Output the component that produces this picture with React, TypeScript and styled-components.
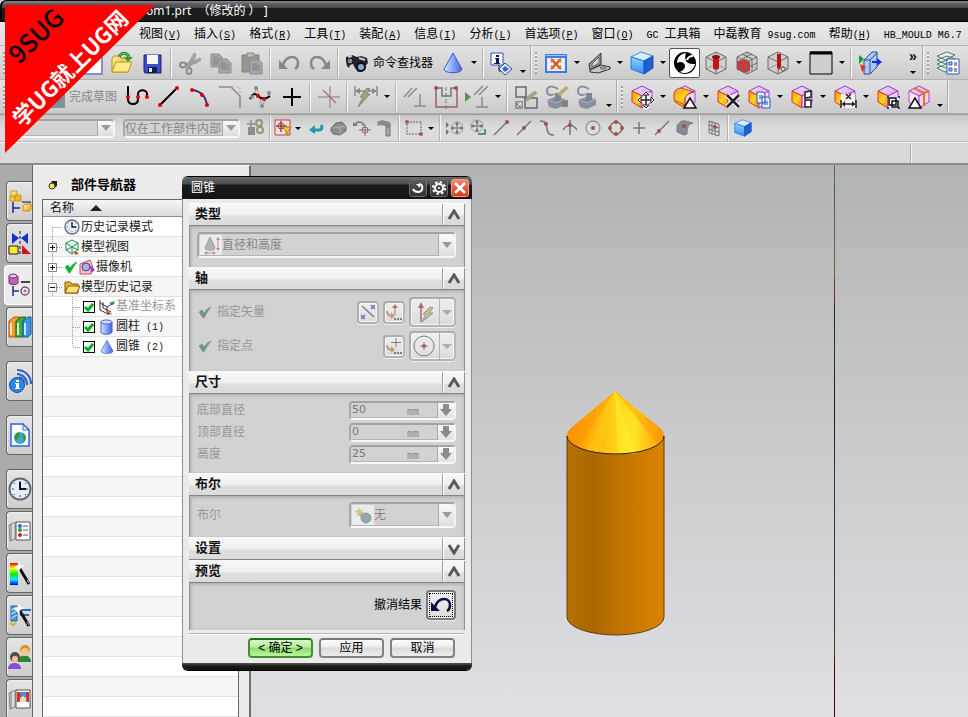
import React from "react";
import styled, { createGlobalStyle, css } from "styled-components";

const cjk = `"Liberation Sans", "Noto Sans CJK SC", sans-serif`;
const mono = `"Liberation Mono", "Noto Sans CJK SC", monospace`;

const GlobalStyle = createGlobalStyle`
  * { box-sizing: border-box; }
  body { margin: 0; background: #d4d4d4; font: 12px/16px ${cjk}; color: #111; }
  button, input, select { font: inherit; color: inherit; }
`;

/* ---------- frame ---------- */

const Page = styled.div`
  position: relative;
  display: flex;
  flex-direction: column;
  height: 100vh;
  overflow: hidden;
`;

const TitleBar = styled.header`
  flex: none;
  height: 22px;
  padding: 2px 0 0 144px;
  border: solid #000;
  border-width: 1px 0 1px 2px;
  border-radius: 6px 0 0 0;
  background: linear-gradient(#85858b 0, #5b5b60 3px, #48484c 7px, #1c1c1c 7px);
  color: #fff;
  font: 12px/16px "Noto Sans", "Noto Sans CJK SC", sans-serif;
  white-space: pre;
`;

const MenuBar = styled.nav`
  flex: none;
  display: flex;
  gap: 13px;
  height: 24px;
  padding: 4px 0 0 139px;
  background: linear-gradient(#e8e8e8, #dedede);
  border-bottom: 1px solid #b5b5b5;
  overflow: hidden;
`;

const MenuLink = styled.a`
  flex: none;
  color: #000;
  text-decoration: none;
  white-space: pre;
  line-height: 16px;
  small { font: 10px/16px ${mono}; }
`;

const ToolRow = styled.div`
  flex: none;
  display: flex;
  height: 34px;
  border-bottom: 1px solid #b2b2b2;
  background: #d3d3d3;
  overflow: hidden;
`;

const SelectionRow = styled.div`
  flex: none;
  display: flex;
  align-items: center;
  height: 28px;
  padding-left: 6px;
  border-top: 1px solid #999;
  border-bottom: 1px solid #bbb;
  background: linear-gradient(#c6c6c6, #dbdbdb 12px, #dcdcdc);
  overflow: hidden;
`;

const CueRow = styled.div`
  flex: none;
  display: flex;
  height: 23px;
  border-top: 1px solid #f2f2f2;
  border-bottom: 2px solid #8c8c8c;
  background: #d9d9d9;
`;
const CueText = styled.div`
  flex: 1;
  border-right: 1px solid #aaa;
`;
const StatusText = styled.div`
  width: 57px;
  border-left: 1px solid #f4f4f4;
`;

const Toolbar = styled.div<{ $lead?: number }>`
  flex: none;
  display: flex;
  align-items: center;
  padding: 0 1px 0 0;
  border-right: 1px solid #a8a8a8;
  box-shadow: 1px 0 0 #f4f4f4;
  background: linear-gradient(#e2e2e2, #dadada 40%, #cacaca);
  margin-right: 1px;
  > :first-child { margin-right: ${(p) => p.$lead ?? 3}px; }
`;

const Grip = styled.span`
  width: 2px;
  height: 22px;
  margin: 0 3px;
  background: repeating-linear-gradient(#a2a2a2 0 2px, #ececec 2px 4px);
`;

const Tool = styled.button<{ $size?: "small" | "tight"; $framed?: boolean }>`
  flex: none;
  display: flex;
  align-items: center;
  justify-content: center;
  width: ${(p) => (p.$size === "tight" ? 19 : p.$size === "small" ? 23 : 31)}px;
  height: ${(p) => (p.$size ? 22 : 30)}px;
  padding: 0;
  border: ${(p) => (p.$framed ? "1px solid #555" : "0")};
  border-radius: 2px;
  background: ${(p) => (p.$framed ? "#fff" : "none")};
  svg { flex: none; }
`;

const TextTool = styled.button<{ $dim?: boolean }>`
  flex: none;
  display: flex;
  align-items: center;
  gap: 4px;
  height: 30px;
  padding: 0 4px;
  border: 0;
  background: none;
  color: ${(p) => (p.$dim ? "#8a8a8a" : "#000")};
  white-space: nowrap;
`;

const Sep = styled.span`
  flex: none;
  width: 2px;
  height: 30px;
  margin: 0 2px;
  border-left: 1px solid #b4b4b4;
  border-right: 1px solid #f6f6f6;
`;

const Drop = styled.button<{ $low?: boolean }>`
  flex: none;
  display: flex;
  justify-content: center;
  align-items: center;
  width: 12px;
  height: 24px;
  padding: ${(p) => (p.$low ? "18px 0 0" : "0")};
  border: 0;
  background: none;
  &::before {
    content: "";
    border: solid transparent;
    border-width: 3px 3px 0;
    border-top-color: #000;
  }
`;

const Overflow = styled.button`
  display: flex;
  flex-direction: column;
  align-items: center;
  justify-content: space-between;
  width: 16px;
  height: 26px;
  margin-left: 20px;
  padding: 0 0 2px;
  border: 0;
  background: none;
  font: bold 14px/12px ${cjk};
  &::after {
    content: "";
    border: solid transparent;
    border-width: 3px 3px 0;
    border-top-color: #000;
  }
`;

/* ---------- combos and fields ---------- */

const wellBorder = css`
  border: 2px solid;
  border-color: #a3a3a3 #f4f4f4 #f8f8f8 #a8a8a8;
  border-radius: 4px;
  box-shadow: inset -1px -1px 0 #b4b4b4;
`;

type ComboKind = "type" | "scope" | "form" | "narrow";
const comboWidth: Record<ComboKind, string> = { type: "109px", scope: "117px", form: "auto", narrow: "107px" };

const Combo = styled.div<{ $kind: ComboKind }>`
  ${wellBorder}
  display: flex;
  align-items: center;
  flex: none;
  width: ${(p) => comboWidth[p.$kind]};
  height: ${(p) => (p.$kind === "type" || p.$kind === "scope" ? 19 : 26)}px;
  margin-right: ${(p) => (p.$kind === "type" ? 8 : p.$kind === "scope" ? 4 : 0)}px;
  background: #d2d2d2;
  color: #868686;
  select {
    flex: 1;
    min-width: 0;
    height: 100%;
    padding: 0;
    border: 0;
    background: none;
    appearance: none;
    opacity: 1;
    color: #868686;
    text-overflow: clip;
  }
`;
const ComboIcon = styled.span`
  display: flex;
  justify-content: center;
  width: 22px;
  height: 20px;
  margin-left: 1px;
  background: #ebebeb;
`;
const ComboArrow = styled.span`
  display: flex;
  align-items: center;
  justify-content: center;
  align-self: stretch;
  width: 16px;
  border-left: 1px solid #aaa;
  border-radius: 0 3px 3px 0;
  background: linear-gradient(#fafafa, #dedede);
  &::before {
    content: "";
    border: solid transparent;
    border-width: 6px 5px 0;
    border-top-color: #9b9b9b;
  }
`;

/* ---------- work area ---------- */

const Work = styled.main`
  flex: 1;
  min-height: 0;
  display: flex;
`;

const ResourceBar = styled.div`
  flex: none;
  display: flex;
  flex-direction: column;
  gap: 2px;
  width: 33px;
  padding: 16px 0 0 6px;
  background: #ababab;
  border-right: 1px solid #666;
  overflow: hidden;
`;

const ResourceTab = styled.button<{ $active?: boolean; $apart?: boolean }>`
  flex: none;
  display: flex;
  align-items: center;
  justify-content: center;
  height: 40px;
  margin: ${(p) => (p.$apart ? "12px" : "0")} ${(p) => (p.$active ? "-1px" : "0")} 0 ${(p) => (p.$active ? "-2px" : "0")};
  padding: 0;
  border: 1px solid ${(p) => (p.$active ? "#fff" : "#666")};
  border-right: 0;
  border-radius: 4px 0 0 4px;
  background: ${(p) => (p.$active ? "#ececec" : "linear-gradient(#e4e4e4, #cfcfcf)")};
  box-shadow: inset 1px 1px 0 #eee;
  svg { flex: none; }
`;

const Navigator = styled.section`
  flex: none;
  display: flex;
  flex-direction: column;
  width: 218px;
  padding: 0 10px 0 9px;
  border-right: 2px solid #6e6e6e;
  border-top: 1px solid #fff;
  background: #ececec;
`;

const NavTitle = styled.h2`
  display: flex;
  align-items: center;
  gap: 13px;
  margin: 0;
  padding: 4px 0 0 6px;
  height: 33px;
  font: bold 13px/16px ${cjk};
  color: #000;
`;

const TreeBox = styled.div`
  flex: 1;
  min-height: 0;
  border: solid #666;
  border-width: 1px 1px 0 1px;
  overflow: hidden;
  background: repeating-linear-gradient(#fff 0 19px, #e2e2e2 19px 20px, #f6f6f6 20px 39px, #e2e2e2 39px 40px) 0 17px;
`;

const TreeHead = styled.div`
  display: flex;
  align-items: center;
  gap: 16px;
  height: 17px;
  padding-left: 7px;
  border-bottom: 1px solid #8d8d8d;
  background: linear-gradient(#f6f6f6, #d9dadb);
`;

const Tree = styled.ul`
  margin: 0;
  padding: 0;
  list-style: none;
`;

const TreeRow = styled.li<{ $level: number; $dim?: boolean }>`
  display: flex;
  align-items: center;
  gap: 1px;
  height: 20px;
  padding-left: ${(p) => (p.$level === 2 ? 28 : 4)}px;
  color: ${(p) => (p.$dim ? "#999" : "#222")};
  white-space: pre;
  small { font: 10px/16px ${mono}; }
  svg { flex: none; }
`;

const RowLabel = styled.label`
  display: flex;
  align-items: center;
  gap: 1px;
`;

const Tick = styled.input`
  appearance: none;
  width: 12px;
  height: 12px;
  margin: 0 3px 0 0;
  border: 1px solid #000;
  background: #fff;
  &:checked {
    background: #fff
      url("data:image/svg+xml,%3Csvg xmlns='http://www.w3.org/2000/svg' viewBox='0 0 10 10'%3E%3Cpath d='M1 5L4 8 9 2' fill='none' stroke='%2300b020' stroke-width='3'/%3E%3C/svg%3E");
  }
`;

const Viewport = styled.section`
  flex: 1;
  position: relative;
  background: linear-gradient(#b2b3b5, #c6c7c9 42%, #dfe0e3);
  overflow: hidden;
`;
const DatumLine = styled.div`
  position: absolute;
  top: 0;
  bottom: 0;
  left: 583px;
  width: 1px;
  background: linear-gradient(
    #4f6a55 0 18px, #555 18px 42px, #6b575c 42px 90px, #6b6420 90px 114px, #7a2a30 114px 137px,
    #222c30 137px 180px, #24362c 180px 207px, #222 207px 280px, #2c2c48 280px 302px, #2c3c3c 302px 390px,
    #33353a 390px 468px, #4a4400 468px 492px, #580008 492px
  );
`;
const Solid = styled.svg`
  position: absolute;
  left: 315px;
  top: 224px;
`;

/* ---------- dialog ---------- */

const Dialog = styled.form`
  position: absolute;
  left: 182px;
  top: 176px;
  width: 290px;
  border: solid #000;
  border-width: 1px 0 1px;
  border-radius: 6px;
  background: #e6e6e6;
  overflow: hidden;
`;

const DialogTitle = styled.div`
  display: flex;
  align-items: center;
  gap: 3px;
  height: 22px;
  padding: 0 3px 0 9px;
  background: linear-gradient(#6a6b6d, #4a4b4d 7px, #1c1c1c 8px, #141414);
  color: #fff;
  h1 { flex: 1; margin: 0; font: 12px/16px ${cjk}; }
`;

const TitleButton = styled.button<{ $close?: boolean }>`
  display: flex;
  align-items: center;
  justify-content: center;
  width: 18px;
  height: 18px;
  padding: 0;
  border: 1px solid ${(p) => (p.$close ? "#ff9c86" : "#6b6b6b")};
  border-radius: 3px;
  background: ${(p) => (p.$close ? "linear-gradient(#f0866c, #dd3618)" : "linear-gradient(#5a5a5a, #303030)")};
`;

const DialogBody = styled.div`
  padding: 4px 6px 5px;
  border: solid #8f8f8f;
  border-width: 0 1px;
  background: #ebebeb;
`;

const DialogFoot = styled.div`
  height: 7px;
  background: linear-gradient(#555, #1c1c1c 3px, #111);
`;

const Group = styled.section``;

const GroupHead = styled.div`
  display: flex;
  height: 23px;
  padding-left: 6px;
  border-top: 1px solid #fbfbfb;
  border-bottom: 1px solid #858585;
  background: linear-gradient(#f8f8f8, #eeeff0 11px, #dedfe0 12px, #d9dadb);
  h2 { flex: 1; margin: 0; font: bold 13px/20px ${cjk}; }
`;

const FoldButton = styled.button`
  display: flex;
  align-items: center;
  justify-content: center;
  width: 23px;
  padding: 0;
  border: 0;
  border-left: 1px solid #a0a0a0;
  border-right: 1px solid #909090;
  background: none;
  box-shadow: inset 1px 0 0 #fff;
`;

const GroupBody = styled.div<{ $kind: "combo" | "rows" | "preview" }>`
  display: flex;
  flex-direction: column;
  padding: ${(p) => (p.$kind === "combo" ? "6px 8px 9px 7px" : p.$kind === "rows" ? "5px 8px 8px 7px" : "7px 8px 10px")};
  border: solid #909090;
  border-width: 0 1px;
  background: #d2d2d2;
  box-shadow: inset 0 2px 3px #b3b3b3, inset 2px 0 2px #bdbdbd;
`;

const Field = styled.div<{ $tall?: boolean; $live?: boolean }>`
  display: flex;
  align-items: center;
  gap: 4px;
  height: ${(p) => (p.$tall ? "34px" : "auto")};
  min-height: 22px;
  color: ${(p) => (p.$live ? "#000" : "#979797")};
  > label, > span { flex: 1; }
  > svg { margin: 0 1px; }
  > span { text-align: ${(p) => (p.$live ? "right" : "left")}; }
`;

const Entry = styled.div`
  ${wellBorder}
  display: flex;
  align-items: stretch;
  width: 107px;
  height: 19px;
  background: #d2d2d2;
  input {
    width: 56px;
    padding: 0 0 1px 1px;
    border: 0;
    background: none;
    color: #777;
    font: 11px/14px "DejaVu Sans", sans-serif;
  }
  em { flex: 1; font: 10px/17px "DejaVu Sans Mono", monospace; color: #858585; }
`;
const StepButton = styled.button`
  width: 17px;
  padding: 0;
  display: flex;
  align-items: center;
  justify-content: center;
  border: 0;
  border-left: 1px solid #aaa;
  background: linear-gradient(#fafafa, #e2e2e2);
`;

const IconButton = styled.button<{ $kind: "small" | "split" | "focus" }>`
  flex: none;
  display: flex;
  align-items: center;
  justify-content: center;
  width: ${(p) => (p.$kind === "small" ? 22 : p.$kind === "split" ? 47 : 30)}px;
  height: ${(p) => (p.$kind === "small" ? 23 : 30)}px;
  padding: 0;
  border: 2px solid;
  border-color: ${(p) => (p.$kind === "focus" ? "#777" : "#adadad #b8b8b8 #b2b2b2 #adadad")};
  border-radius: 4px;
  outline: ${(p) => (p.$kind === "focus" ? "1px dotted #000" : "0")};
  outline-offset: -4px;
  background: linear-gradient(#eee, #e6e6e6 50%, #dadada);
  box-shadow: inset 0 0 0 1px #f6f6f6, 0 1px 0 #eee;
  > svg { flex: none; }
  > i {
    display: flex;
    align-items: center;
    justify-content: center;
    align-self: stretch;
    width: 15px;
    margin-left: 3px;
    border-left: 1px solid #b5b5b5;
  }
  > i::before {
    content: "";
    border: solid transparent;
    border-width: 5px 5px 0;
    border-top-color: #aaa;
  }
`;

const Actions = styled.div`
  display: flex;
  justify-content: flex-end;
  gap: 6px;
  margin-top: 3px;
  padding: 4px 10px 0 0;
  border-top: 1px solid #b5b5b5;
  box-shadow: inset 0 1px 0 #fff;
`;

const Action = styled.button<{ $main?: boolean }>`
  width: 65px;
  height: 20px;
  padding: 0;
  border: 2px solid ${(p) => (p.$main ? "#4b8a3e" : "#838383")};
  border-top-color: ${(p) => (p.$main ? "#1d701d" : "#777")};
  border-radius: 4px;
  background: ${(p) =>
    p.$main
      ? "linear-gradient(#d6f9c8, #b4ee9c 45%, #8fdc6e 50%, #b9f79a)"
      : "linear-gradient(#fff, #ececec 45%, #dadada 50%, #ededed)"};
  color: #000;
  line-height: 14px;
  white-space: pre;
`;

const Ribbon = styled.svg`
  position: absolute;
  left: 5px;
  top: 5px;
  overflow: visible;
`;

/* ---------- drawings ---------- */

const Ico = ({ s = 24, children, o = 1 }: { s?: number; o?: number; children: React.ReactNode }) => (
  <svg width={s} height={s} viewBox={`0 0 ${s} ${s}`} fill="none" opacity={o} aria-hidden="true">
    {children}
  </svg>
);

const Defs = () => (
  <svg width="0" height="0" aria-hidden="true" display="block">
    <defs>
      <linearGradient id="gBlue" x2="1"><stop stopColor="#dbe9ff" /><stop offset=".5" stopColor="#86a6f8" /><stop offset="1" stopColor="#4a63d8" /></linearGradient>
      <linearGradient id="gOrange" x1="0" x2="1" y2="1"><stop stopColor="#ff9a18" /><stop offset=".5" stopColor="#ffd21f" /><stop offset="1" stopColor="#ff7a12" /></linearGradient>
      <linearGradient id="gPurple" x2="1" y2="1"><stop stopColor="#f9eaff" /><stop offset="1" stopColor="#cf9be6" /></linearGradient>
      <linearGradient id="gGold" x2="1" y2="1"><stop stopColor="#fff3a0" /><stop offset="1" stopColor="#e8a41a" /></linearGradient>
      <linearGradient id="gSky" y2="1" x2="0"><stop stopColor="#8fd4ff" /><stop offset="1" stopColor="#2f8df0" /></linearGradient>
      <linearGradient id="gRain" y2="1" x2="0"><stop stopColor="#f00" /><stop offset=".25" stopColor="#ff0" /><stop offset=".5" stopColor="#0e0" /><stop offset=".75" stopColor="#0ef" /><stop offset="1" stopColor="#00f" /></linearGradient>
      <linearGradient id="gBody" x2="1"><stop stopColor="#b87100" /><stop offset=".25" stopColor="#a96700" /><stop offset=".6" stopColor="#c47600" /><stop offset="1" stopColor="#dc8400" /></linearGradient>
      <linearGradient id="gCone" x2="1"><stop stopColor="#ff9000" /><stop offset=".28" stopColor="#ffb40c" /><stop offset=".5" stopColor="#ffd21a" /><stop offset=".7" stopColor="#ffe626" /><stop offset=".85" stopColor="#ffbd14" /><stop offset="1" stopColor="#ff9d06" /></linearGradient>
    </defs>
  </svg>
);

const NewIcon = () => (
  <Ico><path d="M2 1h14l7 6v16H2z" fill="#fff" stroke="#8b8bd0" strokeWidth="2" /></Ico>
);
const FinishIcon = () => (
  <Ico><path d="M0 7h24v16H0z" fill="#7d929b" /></Ico>
);
const OpenIcon = () => (
  <Ico>
    <path d="M2 7l2-2h5l2 2h7v14H2z" fill="url(#gGold)" stroke="#b98c10" />
    <path d="M2 21L6 11h16l-4 10z" fill="#ffe98a" stroke="#c09418" />
    <path d="M9 6c2-5 8-5 10 0" stroke="#2a8a2a" strokeWidth="3" />
    <path d="M9 6c2-5 8-5 10 0" stroke="#7fd46a" strokeWidth="1" />
    <path d="M14 6h9l-5 5z" fill="#2f9e2f" />
  </Ico>
);
const SaveIcon = () => (
  <Ico>
    <path d="M3 4h17v18H4l-1-2z" fill="#3a50c8" stroke="#1b2570" />
    <path d="M6 4h11v9H6z" fill="#f2f6ff" />
    <path d="M7 16h9v6H7z" fill="#111a4a" />
    <path d="M8 17h3v4H8z" fill="#dfe6ff" />
  </Ico>
);
const CutIcon = () => (
  <Ico>
    <path d="M9 15L16 2l2 1-1 4-5 9zM8 13l14-6 1 2-4 3-10 3z" fill="#a6a6a6" stroke="#8c8c8c" strokeWidth=".6" />
    <ellipse cx="5" cy="14" rx="3" ry="2.4" stroke="#8c8c8c" strokeWidth="2" />
    <ellipse cx="11" cy="20" rx="2.4" ry="3" stroke="#8c8c8c" strokeWidth="2" />
  </Ico>
);
const CopyIcon = () => (
  <Ico>
    <path d="M2 3h8l3 3v10H2zM10 8h8l4 4v10H10z" fill="#a4a4a9" stroke="#8f8f95" />
    <path d="M4 7h5M4 9h7M4 11h5M4 13h5M12 12h5M12 14h8M12 16h8M12 18h8" stroke="#83838b" />
  </Ico>
);
const PasteIcon = () => (
  <Ico>
    <path d="M2 4h17v17H2z" fill="#96968e" stroke="#83837c" />
    <path d="M7 2h7v4H7z" fill="#bdbdb8" stroke="#888" />
    <path d="M10 9h9l3 3v11H10z" fill="#a6a6ac" stroke="#8a8a90" />
    <path d="M12 13h6M12 15h8M12 17h8M12 19h8" stroke="#80808a" />
  </Ico>
);
const UndoIcon = ({ flip = false, color = "#87878b" }: { flip?: boolean; color?: string }) => (
  <Ico>
    <g transform={flip ? "matrix(-1 0 0 1 24 0)" : undefined}>
      <path d="M6 14C8 8 11 6 15 6c4 0 6 3 6 6 0 3-1 5-3 6" stroke={color} strokeWidth="2.500" />
      <path d="M2 9v9h9z" fill={color} />
    </g>
  </Ico>
);
const BinocularsIcon = () => (
  <Ico>
    <path d="M1 6l6-2 5 2 4-1 6 2 1 5-3 3-2 5-5 1-3-4-2-4-3 1-1 3-2-2-1-5z" fill="#22252c" />
    <circle cx="5" cy="10" r="3" fill="#7d8796" stroke="#111" />
    <circle cx="16" cy="16" r="4" fill="#8aa5d8" stroke="#111" strokeWidth="2" />
    <path d="M3 6l4-1M14 7l6 2" stroke="#c8ccd8" strokeWidth="2" />
  </Ico>
);
const ConeIcon = ({ s = 24 }: { s?: number }) => (
  <svg width={s} height={s} viewBox="0 0 24 24" aria-hidden="true">
    <path d="M12 2L3 18c0 5 18 5 18 0z" fill="url(#gBlue)" stroke="#3b59d8" />
  </svg>
);
const InfoIcon = () => (
  <Ico>
    <path d="M1 2h12v12H1z" fill="#fff" stroke="#2b4fc4" />
    <path d="M6 4h3v2H6zM5 7h4v5h1v1H4v-1h2V8H5z" fill="#0a1a5c" />
    <path d="M9 14v6h2" stroke="#222" />
    <path d="M15 12l7 6-7 6-6-6z" fill="#e8f0ff" stroke="#2a4a90" />
    <path d="M15 15l4 3-4 3-3-3z" fill="#2f68d8" />
  </Ico>
);
const FitIcon = () => (
  <Ico>
    <path d="M1 3h22v19H1z" fill="#3a7cf0" /><path d="M3 7h18v13H3z" fill="#e9eefb" />
    <path d="M7 8l10 10M17 8L7 18" stroke="#d8500c" strokeWidth="2" />
    <path d="M7 8h4l-4 4zM17 8h-4l4 4zM7 18v-4l4 4zM17 18v-4l-4 4z" fill="#f06a10" />
    <path d="M2 4.500h20" stroke="#9cc4ff" />
  </Ico>
);
const AngleIcon = () => (
  <Ico>
    <path d="M2 13L14 2v11L3 19z" fill="#9a9a9a" stroke="#333" /><path d="M5 13l7-7v6l-7 4z" fill="#d6d6d6" stroke="#666" />
    <path d="M3 19l11-5 9 2v2l-12 4-8-1z" fill="#c4c4c4" stroke="#333" />
    <ellipse cx="16" cy="17" rx="3" ry="1" fill="#eee" stroke="#555" />
  </Ico>
);
const BlueCube = ({ s = 24 }: { s?: number }) => (
  <svg width={s} height={s} viewBox="0 0 24 24" aria-hidden="true">
    <path d="M1 6l10-5 12 4-9 5z" fill="#d5efff" stroke="#3d8ae8" />
    <path d="M1 6l13 4v13L1 18z" fill="url(#gSky)" stroke="#2b78e0" />
    <path d="M14 10l9-5v12l-9 6z" fill="#1f5fd0" stroke="#1b55c0" />
  </svg>
);
const RenderIcon = () => (
  <Ico>
    <circle cx="12" cy="12" r="11" fill="#000" />
    <path d="M13 2C7 3 4 7 4 12c3-2 8-1 8 3 0 3-3 5-5 6 2 1 4 1 6 1 5-1 8-5 9-9-3 0-7 0-9-3-1-3-1-6 0-8z" fill="#fff" />
    <path d="M14 9c1-3 3-4 6-4" stroke="#fff" strokeWidth="2" />
  </Ico>
);
const WireCube = ({ kind }: { kind: "shaft" | "block" | "pin" }) => (
  <Ico>
    <path d="M12 1l10 5v12l-10 5-10-5V6z" fill="#cfcfcf" />
    <path d="M12 1v12l10 5M12 13L2 18" stroke="#9a9a9a" />
    {kind === "block" && <path d="M2 10l8-2 5 3v9l-6 2-7-4z" fill="#e23030" />}
    <path d="M12 1l10 5v12l-10 5-10-5V6zM2 6l10 5 10-5M12 11v12" stroke="#6a6a6a" />
    {kind === "block" && <path d="M7 3l10 5v12M17 3L7 8v12M2 12l10 5 10-5" stroke="#6a6a6a" />}
    {kind === "shaft" && <><path d="M9 6v11c0 2 6 2 6 0V6z" fill="#c81414" /><ellipse cx="12" cy="6" rx="4" ry="2" fill="#9a0c0c" /></>}
    {kind === "pin" && <><path d="M11 3h4v13l-2 3-2-3z" fill="#b81010" /><circle cx="17" cy="18" r="2" fill="#ddd" stroke="#555" /></>}
  </Ico>
);
const PaneIcon = () => (
  <Ico>
    <path d="M1 1h22v22H1z" fill="#cfcfcf" stroke="#000" /><path d="M1 2h22" stroke="#000" strokeWidth="3" />
  </Ico>
);
const DoorIcon = () => (
  <Ico>
    <path d="M6 9l8-8h5v15l-7 7H6z" fill="#a9c8fa" stroke="#2a4a98" /><path d="M12 9l7-7M12 9v13M6 9h6" stroke="#2a4a98" />
    <path d="M1 4l5 4-5 5z" fill="#12a030" /><path d="M2 13l6 3-4 5z" fill="#e03020" />
    <path d="M14 11h7" stroke="#1030d0" strokeWidth="2" /><path d="M19 7l5 4-5 4z" fill="#1030d0" />
  </Ico>
);
const LayersIcon = () => (
  <Ico>
    <path d="M1 17l10-4 8 3-10 5zM1 13l10-4 8 3-10 5zM1 9l10-4 8 3-10 5zM1 5l10-4 8 3-10 5z" fill="#e4f2ea" stroke="#4d7a66" />
    <path d="M11 8h12v15H11z" fill="#fff" stroke="#2f55c8" />
    <path d="M13 11h3v3h-3zM13 17h3v3h-3z" fill="#9cc" stroke="#3355bb" /><path d="M18 12h3M18 14h3M18 18h3M18 20h3" stroke="#334" />
  </Ico>
);
const CornerIcon = () => (
  <Ico><path d="M4 10l4-5v10M3 8h8M8 14h10" stroke="#b06060" strokeWidth="2" /><path d="M5 10v12h14" stroke="#777" /></Ico>
);

const Dot = ({ x, y, c = "#e00000" }: { x: number; y: number; c?: string }) => <circle cx={x} cy={y} r="2" fill={c} />;

const ProfileIcon = () => (
  <Ico><path d="M3 1v13c0 3 2 5 5 5s5-2 5-5V9c0-5 9-5 9 0v3" stroke="#000" strokeWidth="2" /><Dot x={3} y={12} /><Dot x={13} y={12} /><Dot x={22} y={12} /></Ico>
);
const LineIcon = () => (
  <Ico><path d="M4 20L21 3" stroke="#000" strokeWidth="2" /><Dot x={4} y={20} /><Dot x={21} y={3} /></Ico>
);
const ArcIcon = () => (
  <Ico><path d="M5 5c9 1 14 6 15 16" stroke="#402a90" strokeWidth="2" /><Dot x={5} y={5} /><Dot x={15} y={10} /><Dot x={20} y={20} /></Ico>
);
const FilletIcon = () => (
  <Ico o={0.8}><path d="M1 2h12M22 11v12" stroke="#777" strokeWidth="1.500" /><path d="M13 2l9 9" stroke="#a06868" strokeWidth="1.500" /><path d="M14 2h8v8" stroke="#999" strokeDasharray="2 2" /></Ico>
);
const SplineIcon = () => (
  <Ico>
    <path d="M3 12l5-9 5 18 8-13" stroke="#9a9a9a" /><path d="M1 14c3-7 6-5 8-3s6 5 12 0" stroke="#000" strokeWidth="2" />
    {[[7, 3], [20, 8], [13, 21], [3, 12]].map(([x, y]) => <Dot key={x} x={x} y={y} c="#8a8a8a" />)}<Dot x={9} y={11} /><Dot x={15} y={14} />
  </Ico>
);
const PlusIcon = () => <Ico><path d="M12 3v18M3 12h18" stroke="#000" strokeWidth="2" /></Ico>;
const TrimIcon = () => <Ico o={0.75}><path d="M13 1v22M1 12h22" stroke="#888" strokeWidth="1.500" /><path d="M6 5l13 13" stroke="#a55" strokeWidth="1.500" /></Ico>;
const BoltIcon = () => (
  <Ico><path d="M1 1v10M23 1v10M2 6h20" stroke="#8a8a8a" strokeWidth="1.500" /><path d="M6 3v6L1 6zM18 3v6l5-3z" fill="#888" /><path d="M13 3l3 1-4 5h4L4 22l5-10H6z" fill="#a3a386" stroke="#83836a" /></Ico>
);
const ParallelIcon = () => <Ico><path d="M1 12L9 3M5 12l9-9M17 9v12M11 21h12" stroke="#8a8a8a" strokeWidth="1.500" /></Ico>;
const SymmetryIcon = () => (
  <Ico><path d="M2 3v19h21V3" stroke="#a06060" strokeWidth="1.500" /><path d="M2 3h6v8h9V3h6" stroke="#777" strokeWidth="1.500" /><path d="M12 2v22" stroke="#777" strokeDasharray="4 2" /><Dot x={2} y={3} c="#a05050" /><Dot x={22} y={3} c="#a05050" /></Ico>
);
const ConstraintIcon = () => <Ico><path d="M0 7l6 5-6 5z" fill="#5e8a5e" /><path d="M9 10l9-9M14 10l9-9M17 12v10M11 22h12" stroke="#8a8a8a" strokeWidth="1.500" /></Ico>;
const SketchAIcon = () => (
  <Ico o={0.85}><path d="M2 2h10v10H2zM11 13h12v10H11z" stroke="#555" strokeWidth="1.500" /><path d="M1 16h8v8H1z" fill="#888" /><path d="M3 22l4-4M4 18h3v3" stroke="#fff" /><path d="M11 17l2-5 8-6 2 2-8 7z" fill="#a59a70" stroke="#777" strokeWidth=".5" /></Ico>
);
const SketchBIcon = ({ pen = false }: { pen?: boolean }) => (
  <Ico o={0.85}><path d="M13 4C7 0 2 1 2 6c0 4 4 5 7 3" stroke="#7a8494" strokeWidth="2" /><path d="M2 15l8-3 10 2v6l-9 4-7-2z" fill="#7b8694" /><path d="M10 8h6v8h-6z" fill="#6c7885" /><path d="M2 15l9 3 9-4" stroke="#a5adb8" />{pen && <><path d="M12 9l9-8 3 2-9 8z" fill="#b3a266" /><path d="M17 15h6v7h-6z" fill="#777" /></>}</Ico>
);

const SyncIcon = ({ kind }: { kind: "move" | "angle" | "delete" | "copy" | "group" | "size" | "frame" | "shell" }) => (
  <Ico>
    <path d="M2 6l10-5 10 5-10 5z" fill="url(#gPurple)" stroke="#9a35c8" />
    {kind === "shell" ? (
      <path d="M2 6l10 5v12L2 17z" fill="#fbe6ff" stroke="#c04ad0" />
    ) : (
      <path d="M2 6l10 5v12L2 17z" fill="url(#gOrange)" stroke="#e03a1a" />
    )}
    <path d="M12 11l10-5v11l-10 6z" fill="#f0d4fa" stroke="#a540cc" />
    {kind === "shell" && <path d="M7 3l10 5v13M17 8l5-2" stroke="#ff6a10" strokeWidth="2" />}
    {kind === "angle" && <path d="M1 15V9c1-4 4-6 7-6l13 4c-4 0-8 2-9 7v6z" fill="url(#gOrange)" stroke="#d0401a" />}
    {(kind === "angle" || kind === "shell") && <path d={kind === "angle" ? "M17 13l6 10H11z" : "M8 13l6 10H2z"} fill="#fff" stroke="#111" strokeWidth="1.500" />}
    {kind === "move" && <><path d="M16 7v17M8 15h16" stroke="#fff" strokeWidth="5" /><path d="M16 9v13M10 15h13" stroke="#222" strokeWidth="1.500" /><path d="M16 7l3 3h-6zM16 23l3-3h-6zM8 15l3-3v6zM24 15l-3-3v6z" fill="#fff" stroke="#222" /></>}
    {kind === "delete" && <><path d="M11 10l12 12M23 10L11 22" stroke="#fff" strokeWidth="5" /><path d="M11 10l12 12M23 10L11 22" stroke="#222" strokeWidth="2.500" /></>}
    {kind === "copy" && <path d="M10 7h6l2 2v9h-8zM15 12h6l2 2v9h-8z" fill="#e2ecff" stroke="#2a55b0" />}
    {kind === "copy" && <path d="M12 11h4M12 13h3M17 17h4M17 19h4" stroke="#2a55b0" />}
    {kind === "group" && <path d="M15 7l6-1v6l-6 1zM15 15h6v7h-6z" fill="#fff" stroke="#222" strokeWidth="1.500" />}
    {kind === "size" && <><path d="M8 9h14v14H8z" fill="#fff" opacity=".8" /><path d="M8 15v8M23 15v8M9 19h13M13 9l5 5M18 9l-5 5" stroke="#222" strokeWidth="1.500" /><path d="M9 19l3-3v6zM22 19l-3-3v6z" fill="#222" /></>}
    {kind === "frame" && <><path d="M12 12h11v11H12z" fill="#fff" /><path d="M13 13h7v7h-7zM16 16h6v6h-6z" stroke="#111" strokeWidth="1.500" /><path d="M11 11h2v2h-2zM22 11h2v2h-2zM11 22h2v2h-2zM22 22h2v2h-2z" fill="#1a3ad0" /></>}
  </Ico>
);

/* selection bar, 18px grid */
const FilterLinkIcon = () => <Ico s={18}><path d="M1 8h7v8H1z" fill="#8d8d8d" /><path d="M4 1v7M0 5h8" stroke="#8d8d8d" strokeWidth="1.500" /><circle cx="12" cy="4" r="3" stroke="#98937c" strokeWidth="2" /><circle cx="13" cy="11" r="3" stroke="#98937c" strokeWidth="2" /></Ico>;
const SnapFilterIcon = () => <Ico s={18}><path d="M1 1h15v15H1z" fill="#f1dfe0" stroke="#d23a4a" /><path d="M7 2v11M2 7h11" stroke="#222" /><circle cx="7" cy="7" r="3" stroke="#d22" /><path d="M8 8h9l-3 4v4l-2-1v-3z" fill="#ffc928" stroke="#b07a10" /></Ico>;
const ReturnIcon = () => <Ico s={18}><path d="M6 11h6c4 0 3-4 2-5" stroke="#1c9aa8" strokeWidth="3" /><path d="M2 11l6-5v9z" fill="#1c9aa8" /></Ico>;
const StoneIcon = () => <Ico s={18}><path d="M1 9l5-5 6-1 4 4v5l-6 4-7-1-2-3z" fill="#8b8b8e" stroke="#6f6f72" /><path d="M3 9l7-1 6-1M10 8v7" stroke="#b4b4b6" /></Ico>;
const RotatePointIcon = () => <Ico s={18}><path d="M2 6c3-5 8-3 9 1" stroke="#888" strokeWidth="2" /><path d="M0 3l5 4H0z" fill="#777" /><circle cx="12" cy="11" r="3" stroke="#a05a5a" /><path d="M12 5v12M6 11h12" stroke="#777" /></Ico>;
const HammerIcon = () => <Ico s={18}><path d="M1 3l5-2 8 2 1 4-3 3-3-3-4-1-3 1z" fill="#8a8a8a" /><path d="M10 8h4v9h-4z" fill="#a8a69a" stroke="#777" /></Ico>;
const MarqueeIcon = () => <Ico s={18}><path d="M2 3h14v12H2z" stroke="#666" strokeDasharray="2 1" /><Dot x={2} y={3} c="#a55" /><Dot x={16} y={15} c="#a55" /></Ico>;
const WheelIcon = ({ alt = false }: { alt?: boolean }) => (
  <Ico s={18}>{!alt && <path d="M0 3l3 3-3 3zM0 10l3 3-3 3z" fill="#4f8a4f" />}<circle cx={alt ? 8 : 11} cy={alt ? 7 : 9} r="6" stroke="#999" /><path d={alt ? "M8 1v12M2 7h12" : "M11 3v12M5 9h12"} stroke="#777" />{(alt ? [[8, 3], [8, 11], [4, 7], [12, 7]] : [[11, 5], [11, 13], [7, 9], [15, 9]]).map(([x, y]) => <circle key={`${x}-${y}`} cx={x} cy={y} r="1.500" fill="#777" />)}{alt && <path d="M9 15h7v-5" stroke="#4f9494" strokeWidth="2" />}</Ico>
);
const snapShapes: { name: string; shape: React.ReactNode }[] = [
  { name: "终点", shape: <><path d="M2 16L15 3" stroke="#777" strokeWidth="1.500" /><Dot x={15} y={3} c="#a05050" /></> },
  { name: "中点", shape: <><path d="M2 16L16 2" stroke="#777" strokeWidth="1.500" /><Dot x={9} y={9} c="#a05050" /></> },
  { name: "控制点", shape: <><path d="M2 2c8 0 6 5 7 8 1 5 3 6 7 6" stroke="#777" strokeWidth="1.500" /><Dot x={8} y={5} c="#a05050" /></> },
  { name: "交点", shape: <><path d="M2 11c4-6 10-6 14 0M9 1v15" stroke="#777" strokeWidth="1.500" /><Dot x={9} y={6} c="#a05050" /></> },
  { name: "圆弧中心", shape: <><circle cx="9" cy="9" r="7" stroke="#777" /><Dot x={9} y={9} c="#a05050" /></> },
  { name: "象限点", shape: <><circle cx="9" cy="9" r="6" stroke="#777" strokeWidth="1.500" />{[[9, 3], [9, 15], [3, 9], [15, 9]].map(([x, y]) => <Dot key={`${x}-${y}`} x={x} y={y} c="#a05050" />)}</> },
  { name: "现有点", shape: <path d="M9 3v12M3 9h12" stroke="#777" strokeWidth="1.500" /> },
  { name: "曲线上的点", shape: <><path d="M2 16L16 2" stroke="#777" strokeWidth="1.500" /><Dot x={6} y={12} c="#a05050" /></> },
  { name: "面上的点", shape: <><path d="M1 7c2-4 6-6 8-5l8 2c-5 1-6 5-6 11l-3 1-7-3z" fill="#868c94" stroke="#777c83" /><Dot x={8} y={7} c="#a05050" /></> },
];
const GridIcon = () => <Ico s={18}><path d="M4 2l10 3v12L4 14zM7 3v12M10 4v12M4 6l10 3M4 10l10 3" stroke="#707070" /><Dot x={10} y={8} c="#a05050" /></Ico>;

/* resource bar, 24px grid */
const AssemblyIcon = () => <Ico><path d="M3 2h6v6H3zM7 6h6v6H7zM2 7h5v5H2z" fill="url(#gGold)" stroke="#d09a10" /><path d="M15 17l2-2h6v5l-2 2h-6z" fill="url(#gGold)" stroke="#c28a10" /><path d="M5 13v11M5 19h7" stroke="#1a2a9a" strokeWidth="1.500" /><path d="M14 13h9" stroke="#111" /></Ico>;
const ConstraintNavIcon = () => <Ico><path d="M4 2l7 5-7 6zM20 2l-7 5 7 6z" fill="#1530d8" /><path d="M12 0v24" stroke="#111" strokeDasharray="3 2" /><path d="M1 15h9v8H1z" fill="#ffe83a" stroke="#222" /><path d="M14 14l9 9h-9z" fill="#d01818" /></Ico>;
const PartNavIcon = () => <Ico><path d="M2 3v7c0 2 9 2 9 0V3" fill="#b868a8" stroke="#7a2a70" /><ellipse cx="6" cy="3" rx="4" ry="2" fill="#ecc0e4" stroke="#7a2a70" /><path d="M14 9h9" stroke="#111" strokeWidth="1.500" /><path d="M6 13v10M6 18h6" stroke="#1a2a9a" strokeWidth="1.500" /><circle cx="18" cy="18" r="4" stroke="#8a4a80" strokeWidth="1.500" /><circle cx="18" cy="18" r="1" stroke="#8a4a80" /></Ico>;
const BooksIcon = () => <Ico><path d="M1 6l5-4h6l-4 4v16H1z" fill="#f39a28" stroke="#a85a10" /><path d="M8 6l5-4h5l-3 4v16H8z" fill="#3fae3a" stroke="#1d701d" /><path d="M15 6l5-4h3v17l-3 3h-5z" fill="#3c92e6" stroke="#1a55a0" /><path d="M3 8v12M10 8v12M17 8v12" stroke="#fff" strokeWidth="1.500" /></Ico>;
const WebInfoIcon = () => <Ico><circle cx="9" cy="16" r="7.500" fill="#2f86e6" stroke="#1a4fa8" /><path d="M8 11h3v2H8zM7 14h4v5h1v1H7v-1h1v-4H7z" fill="#fff" /><path d="M9 5c6 0 10 5 10 11M9 1c8 0 14 6 14 14M11 8c3 1 5 3 5 6" stroke="#2f62c8" strokeWidth="2" /></Ico>;
const WebPageIcon = () => <Ico><path d="M3 1h12l6 6v16H3z" fill="#fff" stroke="#2f62d8" strokeWidth="1.500" /><path d="M15 1v6h6" stroke="#2f62d8" /><circle cx="12" cy="15" r="6" fill="#3aa8d8" /><path d="M7 12c2-3 4-3 5-1s-2 3-2 5-3 1-4-1zM15 10c3 2 4 6 1 9-2-1 0-3-1-5z" fill="#3c9a28" /></Ico>;
const ClockIcon = ({ s = 24 }: { s?: number }) => (
  <svg width={s} height={s} viewBox="0 0 24 24" fill="none" aria-hidden="true"><circle cx="12" cy="12" r="10.500" fill="#e4edf8" stroke="#666b74" strokeWidth="2" /><path d="M12 4v2M12 18v2M4 12h2M18 12h2M6 6l1 1M18 6l-1 1M6 18l1-1M18 18l-1-1" stroke="#444" /><path d="M12 5v7h6" stroke="#0a1230" strokeWidth="2" /></svg>
);
const BookletIcon = ({ kind }: { kind: "list" | "photo" }) => (
  <Ico><path d="M1 6l6-3v17l-5 2z" fill="#ddd" stroke="#888" /><path d="M3 5v16" stroke="#777" /><path d="M8 3h14v18H8z" fill="#fff" stroke="#555" />
    {kind === "list" ? <><Dot x={12} y={7} c="#1a6ae0" /><Dot x={12} y={11} c="#1aa82a" /><Dot x={12} y={16} c="#e01a1a" /><path d="M15 7h5M15 11h5M15 16h5" stroke="#555" /></> : <><path d="M9 5h12v10H9z" fill="#d83020" /><path d="M12 5h6v5l2 5H11l2-5z" fill="#4a90e8" /><path d="M12 11l3-2 3 2v4h-6z" fill="#ffd9a0" /></>}</Ico>
);
const Wand = () => <><path d="M12 8l9 15" stroke="#111" strokeWidth="3" /><path d="M19 19l2 3" stroke="#ccc" /><path d="M11 0l1 4 5 1-5 2-1 5-2-4-4-2 5-2z" fill="#fff" /></>;
const PaletteIcon = () => <Ico><path d="M2 2h8v22H2z" fill="url(#gRain)" /><Wand /></Ico>;
const ProcessIcon = () => <Ico><path d="M3 3h6v15H3z" fill="#4a9ae0" stroke="#1a62a8" /><path d="M3 7l6-3M3 11l6-3M3 15l6-3" stroke="#d8efff" /><path d="M11 7h12M12 12h9" stroke="#2f62c8" strokeWidth="2" /><path d="M2 20l3 2 3-2" stroke="#d8b010" strokeWidth="2" /><Wand /></Ico>;
const RolesIcon = () => <Ico><path d="M10 17c0-9 13-9 13 0z" fill="#2a8a34" /><circle cx="17" cy="5" r="5" fill="#d89020" /><circle cx="17" cy="7" r="4" fill="#f2c890" /><circle cx="7" cy="12" r="5" fill="#5c4a3a" /><circle cx="7" cy="14" r="3" fill="#f0c49a" /><path d="M0 24c0-8 13-8 13 0z" fill="#8a4ae0" /></Ico>;

/* tree */
const Branch = ({ sign }: { sign?: "+" | "-" }) => (
  <svg width="16" height="20" viewBox="0 0 16 20" fill="none" aria-hidden="true">
    <path d={sign ? "M5.500 0v20M10 10.500h6" : "M5.500 10v10M5.500 10.500h10"} stroke="#999" strokeDasharray="1 1" />
    {sign && <><path d="M1.500 6.500h8v8h-8z" fill="#fff" stroke="#888" /><path d={sign === "+" ? "M3 10.500h5M5.500 8v5" : "M3 10.500h5"} stroke="#111" /></>}
  </svg>
);
const ChildBranch = ({ last = false }: { last?: boolean }) => (
  <svg width="11" height="20" viewBox="0 0 11 20" fill="none" aria-hidden="true"><path d={`M1.500 0v${last ? 10 : 20}M2 10.500h8`} stroke="#999" strokeDasharray="1 1" /></svg>
);
const ViewsIcon = () => <Ico s={16}><path d="M8 1l6 3v7l-6 4-6-4V4zM2 4l6 4 6-4M8 8v7M2 11l6-3 6 3" stroke="#159048" /><path d="M9 12l6 2-3 2z" fill="#e83a1a" /></Ico>;
const CheckIcon = ({ c = "#10b030" }: { c?: string }) => <Ico s={14}><path d="M1 7l3-2 2 3c2-3 4-5 7-6-3 4-5 7-7 11H5z" fill={c} stroke={c} strokeWidth=".6" /></Ico>;
const CameraIcon = () => <Ico s={16}><path d="M1 5l10-4 3 8-2 6H1z" fill="#f7c9cf" stroke="#d0405a" /><circle cx="7" cy="8" r="4" fill="#9ab4e8" stroke="#5a3a80" /><path d="M11 6l5 5-4 3z" fill="#9a3ac0" /></Ico>;
const FolderIcon = () => <Ico s={16}><path d="M1 3h5l2 2h6v9H1z" fill="#f0b030" stroke="#8a5a08" /><path d="M1 14L4 7h12l-3 7z" fill="#ffe07a" stroke="#8a5a08" /></Ico>;
const CsysIcon = () => <Ico s={16}><path d="M1 1v10l8 4M1 4l7 4 7-4M4 3v6l8 4M8 8v5" stroke="#333" /><path d="M10 4l6-2-2 4z" fill="#1a9a38" /><path d="M8 12l5 3-5 1z" fill="#e03030" /></Ico>;
const CylinderIcon = () => <Ico s={16}><path d="M2 3v10c0 3 11 3 11 0V3" fill="url(#gBlue)" stroke="#4a60d0" /><ellipse cx="7.500" cy="3" rx="5.500" ry="2" fill="#cfdcff" stroke="#4a60d0" /></Ico>;

/* dialog */
const Fold = ({ open }: { open: boolean }) => (
  <svg width="14" height="12" viewBox="0 0 14 12" fill="none" aria-hidden="true"><path d={open ? "M2 10l5-8 5 8" : "M2 2l5 8 5-8"} stroke="#5a5a5a" strokeWidth="3" /></svg>
);
const ConeDimIcon = () => <Ico s={20} o={0.6}><path d="M9 2L4 13c0 3 10 3 10 0z" fill="#8b8f9a" stroke="#666b78" /><path d="M17 4v10M4 18h10" stroke="#b05050" /><path d="M15 5l2-3 2 3zM15 13l2 3 2-3zM6 16l-3 2 3 2zM12 16l3 2-3 2z" fill="#b05050" /></Ico>;
const ReverseIcon = () => <Ico s={18} o={0.7}><path d="M3 3l12 11" stroke="#555" strokeWidth="1.500" /><path d="M3 15l3-3M12 6l3-3" stroke="#5560b0" strokeWidth="2" /><path d="M11 2h5v5zM2 11v5h5z" fill="#5560b0" /></Ico>;
const PickIcon = ({ kind }: { kind: "vector" | "point" }) => <Ico s={18} o={0.7}>{kind === "vector" ? <><path d="M10 4v8" stroke="#a04040" /><path d="M7 5l3-4 3 4z" fill="#a04040" /></> : <path d="M11 1v9M6 5.500h10" stroke="#555" />}<path d="M2 8c0 4 2 5 6 5" stroke="#b08050" strokeWidth="2" /><path d="M6 9l4 4-4 3z" fill="#b08050" /><path d="M9 15h2v2H9zM12 15h2v2h-2zM15 15h2v2h-2z" fill="#555" /></Ico>;
const VectorIcon = () => <Ico o={0.8}><path d="M9 5v17" stroke="#9a5050" strokeWidth="1.500" /><path d="M6 8l3-6 3 6z" fill="#9a5050" /><path d="M18 7l3 1-4 5h4L10 22l4-8h-3z" fill="#b4b490" stroke="#88886a" /></Ico>;
const TargetIcon = () => <Ico o={0.8}><circle cx="12" cy="12" r="10" stroke="#666" /><path d="M12 8v8M8 12h8" stroke="#9a5050" /><Dot x={12} y={12} c="#a04040" /></Ico>;
const NoneIcon = () => <Ico s={20} o={0.65}><circle cx="13" cy="13" r="5" fill="#5a8888" stroke="#557070" /><path d="M7 8l4 4" stroke="#777" strokeWidth="4" /><path d="M6 2l1 3 4-1-3 3 2 3-4-1-2 3V8L1 6l4-1z" fill="#c8b85a" /></Ico>;
const StepArrow = () => <svg width="12" height="12" viewBox="0 0 12 12" aria-hidden="true"><path d="M3 0h6v5h3L6 12 0 5h3z" fill="#898b8d" /></svg>;

/* ---------- sections ---------- */

type MenuEntry = { pre?: string; text: string; key?: string; post?: string };
const menus: MenuEntry[] = [
  { text: "视图", key: "V" }, { text: "插入", key: "S" }, { text: "格式", key: "R" }, { text: "工具", key: "T" },
  { text: "装配", key: "A" }, { text: "信息", key: "I" }, { text: "分析", key: "L" }, { text: "首选项", key: "P" },
  { text: "窗口", key: "O" }, { pre: "GC ", text: "工具箱" }, { text: "中磊教育", post: " 9sug.com" },
  { text: "帮助", key: "H" }, { text: "", post: "HB_MOULD M6.7" },
];

const T = ({ name, children, framed, size }: { name: string; children: React.ReactNode; framed?: boolean; size?: "small" | "tight" }) => (
  <Tool type="button" aria-label={name} $framed={framed} $size={size}>{children}</Tool>
);
const D = ({ low }: { low?: boolean }) => <Drop type="button" aria-label="更多" $low={low} />;

const StandardTools = () => (
  <ToolRow>
    <Toolbar $lead={70}>
      <Grip />
      <T name="新建"><NewIcon /></T><T name="打开"><OpenIcon /></T><T name="保存"><SaveIcon /></T><Sep />
      <T name="剪切"><CutIcon /></T><T name="复制"><CopyIcon /></T><T name="粘贴"><PasteIcon /></T><Sep />
      <T name="撤消"><UndoIcon /></T><T name="重做"><UndoIcon flip /></T><Sep />
      <TextTool type="button"><BinocularsIcon />命令查找器</TextTool>
      <T name="圆锥"><ConeIcon /></T><D /><Sep />
      <T name="信息"><InfoIcon /></T><D low />
    </Toolbar>
    <Toolbar>
      <Grip />
      <T name="适合窗口"><FitIcon /></T><D /><T name="透视"><AngleIcon /></T><D /><T name="视图方向"><BlueCube /></T><D />
      <T name="渲染样式" framed><RenderIcon /></T><T name="剖切"><WireCube kind="shaft" /></T><T name="编辑剖切"><WireCube kind="block" /></T>
      <T name="剖切选项"><WireCube kind="pin" /></T><D /><T name="背景"><PaneIcon /></T><D /><Sep />
      <T name="退出"><DoorIcon /></T>
      <Overflow type="button">»</Overflow>
    </Toolbar>
    <Toolbar><Grip /><T name="图层设置"><LayersIcon /></T><T name="坐标系"><CornerIcon /></T></Toolbar>
  </ToolRow>
);

const SketchTools = () => (
  <ToolRow>
    <Toolbar $lead={32}>
      <Grip />
      <TextTool type="button" $dim><FinishIcon />完成草图</TextTool>
      <T name="轮廓"><ProfileIcon /></T><T name="直线"><LineIcon /></T><T name="圆弧"><ArcIcon /></T><T name="圆角"><FilletIcon /></T>
      <T name="样条"><SplineIcon /></T><T name="点"><PlusIcon /></T><Sep /><T name="修剪"><TrimIcon /></T><Sep />
      <T name="自动尺寸"><BoltIcon /></T><D /><Sep />
      <T name="约束"><ParallelIcon /></T><T name="对称"><SymmetryIcon /></T><T name="显示约束"><ConstraintIcon /></T><D /><Sep />
      <T name="编辑草图"><SketchAIcon /></T><T name="锁定草图"><SketchBIcon pen /></T><T name="更新草图"><SketchBIcon /></T><D low />
    </Toolbar>
    <Toolbar>
      <Grip />
      <T name="移动面"><SyncIcon kind="move" /></T><D /><T name="偏置区域"><SyncIcon kind="angle" /></T><D /><T name="删除面"><SyncIcon kind="delete" /></T>
      <T name="复制面"><SyncIcon kind="copy" /></T><D /><T name="组合面"><SyncIcon kind="group" /></T><D /><T name="线性尺寸"><SyncIcon kind="size" /></T><D />
      <T name="约束面"><SyncIcon kind="frame" /></T><T name="壳体"><SyncIcon kind="shell" /></T><D low />
    </Toolbar>
  </ToolRow>
);

const SelectionTools = () => (
  <SelectionRow>
    <Combo $kind="type"><select disabled aria-label="类型过滤器"><option></option></select><ComboArrow /></Combo>
    <Combo $kind="scope"><select disabled aria-label="选择范围"><option>仅在工作部件内部</option></select><ComboArrow /></Combo>
    <T name="链接" size="small"><FilterLinkIcon /></T><Sep />
    <T name="捕捉" size="tight"><SnapFilterIcon /></T><D /><T name="返回" size="small"><ReturnIcon /></T><T name="面" size="small"><StoneIcon /></T>
    <T name="旋转点" size="small"><RotatePointIcon /></T><T name="查找" size="small"><HammerIcon /></T><Sep />
    <T name="框选" size="small"><MarqueeIcon /></T><D /><Sep />
    <T name="启用捕捉" size="small"><WheelIcon /></T><T name="清除捕捉" size="small"><WheelIcon alt /></T>
    {snapShapes.map((s) => <T key={s.name} name={s.name} size="small"><Ico s={18}>{s.shape}</Ico></T>)}
    <Sep /><T name="栅格" size="small"><GridIcon /></T><Sep /><T name="实体" size="small"><BlueCube s={18} /></T>
  </SelectionRow>
);

const tabs: { name: string; icon: React.ReactNode; active?: boolean; apart?: boolean }[] = [
  { name: "装配导航器", icon: <AssemblyIcon /> }, { name: "约束导航器", icon: <ConstraintNavIcon /> },
  { name: "部件导航器", icon: <PartNavIcon />, active: true }, { name: "重用库", icon: <BooksIcon /> },
  { name: "信息", icon: <WebInfoIcon />, apart: true }, { name: "浏览器", icon: <WebPageIcon />, apart: true },
  { name: "历史记录", icon: <ClockIcon />, apart: true }, { name: "材料", icon: <BookletIcon kind="list" /> },
  { name: "可视化", icon: <PaletteIcon /> }, { name: "加工向导", icon: <ProcessIcon /> },
  { name: "角色", icon: <RolesIcon /> }, { name: "场景", icon: <BookletIcon kind="photo" /> },
];

const features = [
  { icon: <CsysIcon />, text: "基准坐标系", dim: true },
  { icon: <CylinderIcon />, text: "圆柱", no: " (1)" },
  { icon: <ConeIcon s={16} />, text: "圆锥", no: " (2)" },
];

const PartNavigator = () => (
  <Navigator>
    <NavTitle>
      <Ico s={10}><path d="M1 7l3-6h5v5L5 9z" fill="#222" /><circle cx="4" cy="6" r="3" fill="#f4e04a" stroke="#333" /></Ico>
      部件导航器
    </NavTitle>
    <TreeBox>
      <TreeHead>名称<svg width="12" height="6" viewBox="0 0 12 6" aria-hidden="true"><path d="M6 0l6 6H0z" fill="#222" /></svg></TreeHead>
      <Tree>
        <TreeRow $level={1}><Branch /><ClockIcon s={16} />历史记录模式</TreeRow>
        <TreeRow $level={1}><Branch sign="+" /><ViewsIcon />模型视图</TreeRow>
        <TreeRow $level={1}><Branch sign="+" /><CheckIcon /><CameraIcon />摄像机</TreeRow>
        <TreeRow $level={1}><Branch sign="-" /><FolderIcon />模型历史记录</TreeRow>
        {features.map((f, i) => (
          <TreeRow key={f.text} $level={2} $dim={f.dim}>
            <ChildBranch last={i === 2} />
            <RowLabel><Tick type="checkbox" defaultChecked />{f.icon}<span>{f.text}<small>{f.no}</small></span></RowLabel>
          </TreeRow>
        ))}
      </Tree>
    </TreeBox>
  </Navigator>
);

const Section = ({ title, open = true, kind, children }: { title: string; open?: boolean; kind?: "combo" | "rows" | "preview"; children?: React.ReactNode }) => (
  <Group>
    <GroupHead><h2>{title}</h2><FoldButton type="button" aria-label={title} aria-expanded={open}><Fold open={open} /></FoldButton></GroupHead>
    {kind && <GroupBody $kind={kind}>{children}</GroupBody>}
  </Group>
);

const sizes = [["base", "底部直径", "50"], ["top", "顶部直径", "0"], ["height", "高度", "25"]];

const ConeDialog = () => (
  <Dialog onSubmit={(e) => e.preventDefault()}>
    <DialogTitle>
      <h1>圆锥</h1>
      <TitleButton type="button" aria-label="重置"><Ico s={14}><path d="M8 3c5 1 4 8-1 8-2 0-4-1-5-3" stroke="#fff" strokeWidth="2" /><path d="M5 3h4v4z" fill="#fff" /></Ico></TitleButton>
      <TitleButton type="button" aria-label="选项"><Ico s={14}><circle cx="7" cy="7" r="6" stroke="#fff" strokeWidth="2" strokeDasharray="2.400 2.300" /><circle cx="7" cy="7" r="4" stroke="#fff" strokeWidth="2" /><circle cx="7" cy="7" r="1" fill="#fff" /></Ico></TitleButton>
      <TitleButton type="button" aria-label="关闭" $close><Ico s={14}><path d="M2 2l10 10M12 2L2 12" stroke="#fff" strokeWidth="2.500" /></Ico></TitleButton>
    </DialogTitle>
    <DialogBody>
      <Section title="类型" kind="combo">
        <Combo $kind="form"><ComboIcon><ConeDimIcon /></ComboIcon><select disabled aria-label="类型"><option>直径和高度</option></select><ComboArrow /></Combo>
      </Section>
      <Section title="轴" kind="rows">
        <Field $tall><CheckIcon c="#6f9880" /><span>指定矢量</span>
          <IconButton type="button" disabled aria-label="反向" $kind="small"><ReverseIcon /></IconButton>
          <IconButton type="button" disabled aria-label="矢量对话框" $kind="small"><PickIcon kind="vector" /></IconButton>
          <IconButton type="button" disabled aria-label="自动判断的矢量" $kind="split"><VectorIcon /><i /></IconButton>
        </Field>
        <Field $tall><CheckIcon c="#6f9880" /><span>指定点</span>
          <IconButton type="button" disabled aria-label="点对话框" $kind="small"><PickIcon kind="point" /></IconButton>
          <IconButton type="button" disabled aria-label="圆心" $kind="split"><TargetIcon /><i /></IconButton>
        </Field>
      </Section>
      <Section title="尺寸" kind="rows">
        {sizes.map(([id, label, value]) => (
          <Field key={id}>
            <label htmlFor={id}>{label}</label>
            <Entry><input id={id} defaultValue={value} disabled /><em>mm</em><StepButton type="button" disabled aria-label={`${label}选项`}><StepArrow /></StepButton></Entry>
          </Field>
        ))}
      </Section>
      <Section title="布尔" kind="combo">
        <Field><label htmlFor="bool">布尔</label>
          <Combo $kind="narrow"><ComboIcon><NoneIcon /></ComboIcon><select id="bool" disabled><option>无</option></select><ComboArrow /></Combo>
        </Field>
      </Section>
      <Section title="设置" open={false} />
      <Section title="预览" kind="preview">
        <Field $live><span>撤消结果</span><IconButton type="button" aria-label="撤消结果" $kind="focus"><UndoIcon color="#0c1048" /></IconButton></Field>
      </Section>
      <Actions>
        <Action type="submit" $main>&lt; 确定 &gt;</Action>
        <Action type="button">应用</Action>
        <Action type="button">取消</Action>
      </Actions>
    </DialogBody>
    <DialogFoot />
  </Dialog>
);

export default function App() {
  return (
    <Page>
      <GlobalStyle />
      <Defs />
      <TitleBar>om1.prt  （修改的 ） ]</TitleBar>
      <MenuBar>
        {menus.map((m) => (
          <MenuLink key={m.text} href="#">
            {m.pre && <small>{m.pre}</small>}{m.text}{m.key && <small>(<u>{m.key}</u>)</small>}{m.post && <small>{m.post}</small>}
          </MenuLink>
        ))}
      </MenuBar>
      <StandardTools />
      <SketchTools />
      <SelectionTools />
      <CueRow><CueText /><StatusText /></CueRow>
      <Work>
        <ResourceBar>
          {tabs.map((t) => <ResourceTab key={t.name} type="button" aria-label={t.name} $active={t.active} $apart={t.apart}>{t.icon}</ResourceTab>)}
        </ResourceBar>
        <PartNavigator />
        <Viewport>
          <DatumLine />
          <Solid width="100" height="250" viewBox="0 0 100 250" aria-label="圆柱与圆锥">
            <path d="M1 47v181a48.500 18 0 0 0 97 0V47z" fill="url(#gBody)" stroke="#5a4010" />
            <path d="M49 2L5 39A48.500 18 0 0 0 1 47A48.500 18 0 0 0 98 47A48.500 18 0 0 0 94 39z" fill="url(#gCone)" />
            <path d="M49 2L5 39l-4 8c0 5 6 9 12 12zM49 2l45 37 4 8c0 3-3 6-6 9z" fill="#ff8c00" opacity=".4" />
            <path d="M49 2l3 63h18z" fill="#fff32c" opacity=".5" />
            <path d="M49 2l-16 61-12-2z" fill="#ffc814" opacity=".5" />
            <path d="M1 47A48.500 18 0 0 0 98 47" fill="none" stroke="#2c2418" />
          </Solid>
        </Viewport>
      </Work>
      <ConeDialog />
      <Ribbon width="150" height="148" viewBox="0 0 150 148">
        <path d="M0 0h150L0 148z" fill="#f00" />
        <text transform="translate(14 60) rotate(-44)" fontFamily="Noto Sans CJK SC, sans-serif" fontSize="25" fontWeight="500" fill="#000">9SUG</text>
        <text transform="translate(17 123) rotate(-45)" fontFamily="Noto Sans CJK SC, sans-serif" fontSize="22" fontWeight="700" fill="#fff">学UG就上UG网</text>
      </Ribbon>
    </Page>
  );
}
